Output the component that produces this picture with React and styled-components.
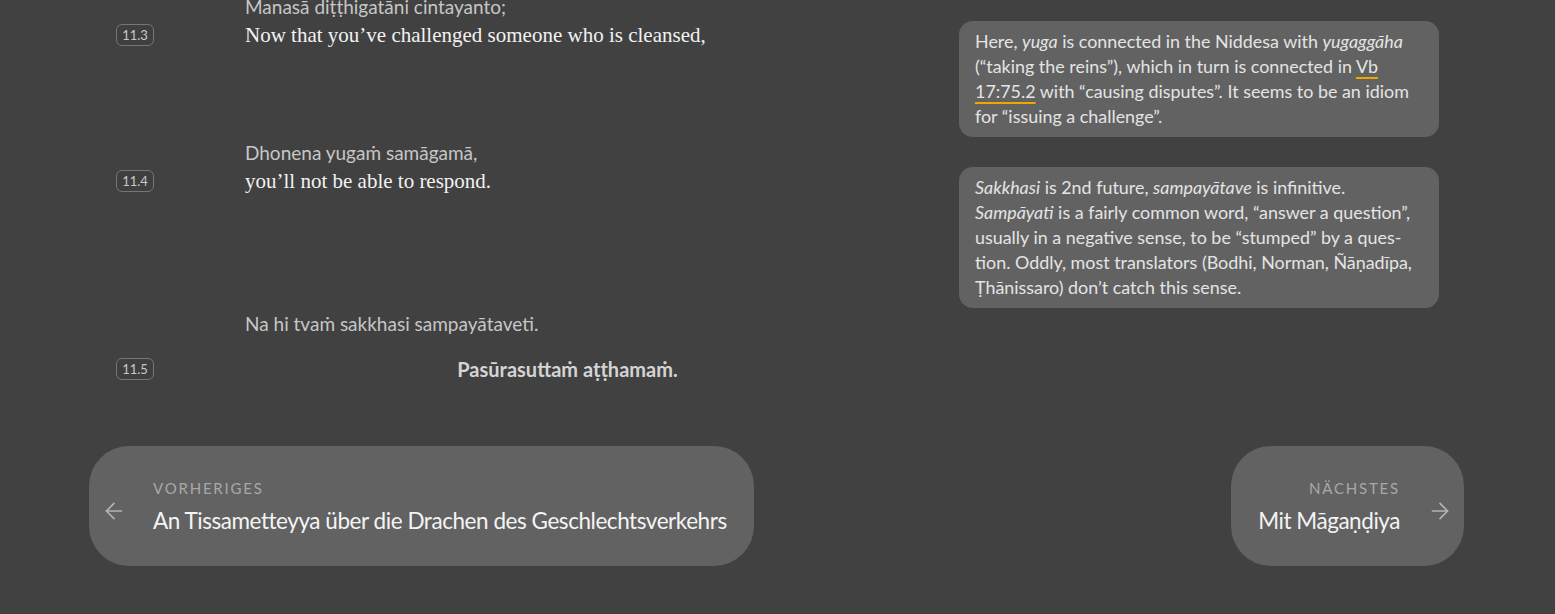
import React from 'react'
import styled, { createGlobalStyle } from 'styled-components'
import { ArrowLeft, ArrowRight } from 'lucide-react'

const Global = createGlobalStyle`
  html, body {
    margin: 0;
    padding: 0;
    background: #414141;
    overflow: hidden;
  }
  body {
    font-family: Lato, "Noto Sans", sans-serif;
    color: #e6e6e6;
  }
`

const Page = styled.main`
  margin-top: -7px;
  padding-left: 116px;
`

const Segment = styled.section`
  display: grid;
  grid-template-columns: 129px 645px 480px;
  column-gap: 0;
  margin-bottom: 2px;
`

const Root = styled.div`
  grid-column: 2;
  grid-row: 1;
  font-size: 19px;
  line-height: 28px;
  color: #c6c6c6;
`

const Badge = styled.span`
  grid-column: 1;
  grid-row: 2;
  justify-self: start;
  align-self: start;
  margin-top: ${(p) => (p.$title ? '20px' : '3px')};
  box-sizing: border-box;
  width: 38px;
  height: 22px;
  border: 1px solid #767676;
  border-radius: 6px;
  background: #3f3f3f;
  font-size: 13px;
  line-height: 20px;
  text-align: center;
  color: #c8c8c8;
`

const Trans = styled.div`
  grid-column: 2;
  grid-row: 2;
  font-family: "Liberation Serif", serif;
  font-size: 21px;
  line-height: 28px;
  color: #f2f2f2;
`

const Note = styled.aside`
  grid-column: 3;
  grid-row: 2;
  margin-left: 69px;
  width: 480px;
  box-sizing: border-box;
  padding: 8px 16px;
  background: #626262;
  border-radius: 14px;
  font-size: 17.9px;
  line-height: 25px;
  color: #e4e4e4;
  white-space: nowrap;

  i {
    font-style: italic;
  }
`

const Ref = styled.span`
  text-decoration: underline;
  text-decoration-color: #f0a800;
  text-decoration-thickness: 2px;
  text-underline-offset: 4px;
`

const EndTitle = styled.h2`
  grid-column: 2;
  grid-row: 2;
  margin: 17px 0 0;
  font-size: 20px;
  font-weight: 700;
  line-height: 28px;
  text-align: center;
  color: #d4d4d4;
`

const Nav = styled.nav`
  display: flex;
  justify-content: space-between;
  align-items: center;
  width: 1375px;
  margin: 63px 0 0 89px;
`

const NavButton = styled.a`
  display: flex;
  align-items: center;
  gap: ${(p) => (p.$prev ? '26px' : '27px')};
  height: 120px;
  box-sizing: border-box;
  padding: ${(p) => (p.$prev ? '0 27px 0 12px' : '0 11px 0 27px')};
  background: #626262;
  border-radius: 40px;
  cursor: pointer;
`

const Arrow = styled.span`
  display: flex;
  margin-top: 10px;
  color: #b4b4b4;
`

const NavText = styled.div`
  display: flex;
  flex-direction: column;
  gap: 5px;
  align-items: ${(p) => (p.$right ? 'flex-end' : 'flex-start')};
  margin-top: 3px;
`

const NavLabel = styled.span`
  font-size: 15px;
  letter-spacing: 1.8px;
  text-transform: uppercase;
  color: #a8a8a8;
  line-height: 22px;
`

const NavTitle = styled.span`
  font-family: Lato, sans-serif;
  font-size: 22.5px;
  letter-spacing: -0.45px;
  line-height: 34px;
  color: #f4f4f4;
`

const segments = [
  {
    id: '11.3',
    root: 'Manasā diṭṭhigatāni cintayanto;',
    trans: 'Now that you’ve challenged someone who is cleansed,',
    note: (
      <>
        Here, <i>yuga</i> is connected in the Niddesa with <i>yugaggāha</i>
        <br />
        (“taking the reins”), which in turn is connected in <Ref>Vb</Ref>
        <br />
        <Ref>17:75.2</Ref> with “causing disputes”. It seems to be an idiom
        <br />
        for “issuing a challenge”.
      </>
    ),
  },
  {
    id: '11.4',
    root: 'Dhonena yugaṁ samāgamā,',
    trans: 'you’ll not be able to respond.',
    note: (
      <>
        <i>Sakkhasi</i> is 2nd future, <i>sampayātave</i> is infinitive.
        <br />
        <i>Sampāyati</i> is a fairly common word, “answer a question”,
        <br />
        usually in a negative sense, to be “stumped” by a ques-
        <br />
        tion. Oddly, most translators (Bodhi, Norman, Ñāṇadīpa,
        <br />
        Ṭhānissaro) don’t catch this sense.
      </>
    ),
  },
]

function App() {
  return (
    <>
      <Global />
      <Page>
        {segments.map((s) => (
          <Segment key={s.id}>
            <Root>{s.root}</Root>
            <Badge>{s.id}</Badge>
            <Trans>{s.trans}</Trans>
            <Note>{s.note}</Note>
          </Segment>
        ))}
        <Segment>
          <Root>Na hi tvaṁ sakkhasi sampayātaveti.</Root>
          <Badge $title>11.5</Badge>
          <EndTitle>Pasūrasuttaṁ aṭṭhamaṁ.</EndTitle>
        </Segment>
      </Page>
      <Nav>
        <NavButton $prev>
          <Arrow><ArrowLeft size={26} strokeWidth={1.5} /></Arrow>
          <NavText>
            <NavLabel>Vorheriges</NavLabel>
            <NavTitle>An Tissametteyya über die Drachen des Geschlechtsverkehrs</NavTitle>
          </NavText>
        </NavButton>
        <NavButton>
          <NavText $right>
            <NavLabel>Nächstes</NavLabel>
            <NavTitle>Mit Māgaṇḍiya</NavTitle>
          </NavText>
          <Arrow><ArrowRight size={26} strokeWidth={1.5} /></Arrow>
        </NavButton>
      </Nav>
    </>
  )
}

export default App
